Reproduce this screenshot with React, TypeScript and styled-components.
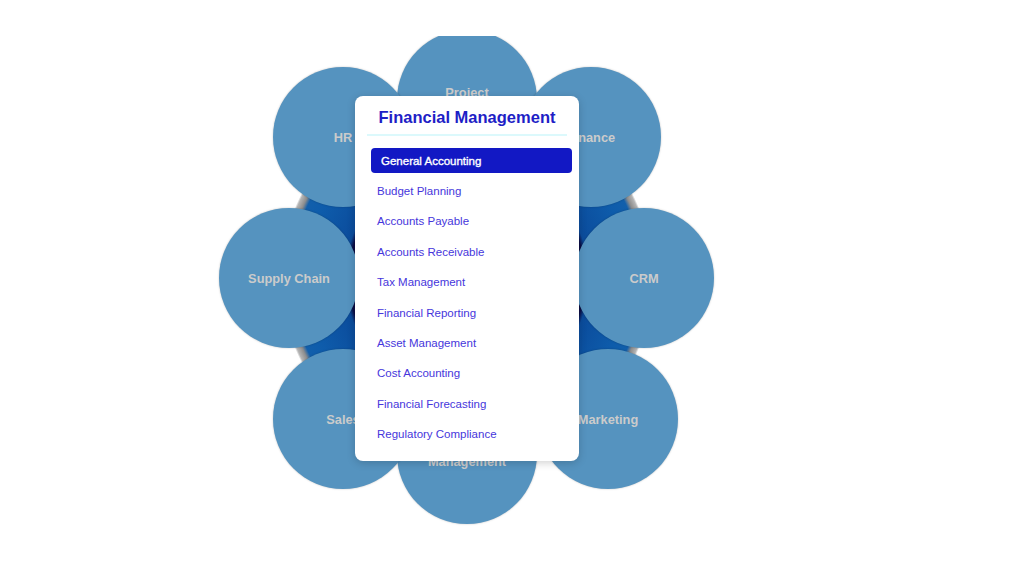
import styled, { createGlobalStyle } from "styled-components";

const GlobalStyle = createGlobalStyle`
  html, body {
    margin: 0;
    padding: 0;
    background: #ffffff;
    font-family: "Liberation Sans", Arial, sans-serif;
  }
`;

const Page = styled.div`
  width: 1024px;
  height: 576px;
  padding-top: 36px;
  box-sizing: border-box;
  overflow: hidden;
`;

const Clip = styled.div`
  height: 540px;
  overflow: hidden;
`;

const Wheel = styled.div`
  position: relative;
  width: 500px;
  height: 500px;
  margin-left: 217px;
  margin-top: -8px;
`;

const Hub = styled.div`
  position: absolute;
  inset: 64px;
  border-radius: 50%;
  background: radial-gradient(
    circle,
    #0a0b3e 0,
    #0b0d45 118px,
    #0b4c9c 122px,
    #0e5cab 160px,
    #125fab 175px,
    #8d8d8d 179px,
    #b5b5b5 184px,
    rgba(255, 255, 255, 0) 186px
  );
`;

const Node = styled.div`
  position: absolute;
  width: 140px;
  height: 140px;
  margin: -70px 0 0 -70px;
  border-radius: 50%;
  background: #5593bf;
  box-shadow: 0 0 2px rgba(0, 0, 0, 0.25);
  display: flex;
  flex-direction: column;
  align-items: center;
  justify-content: center;
  text-align: center;
  color: #cbcbcb;
  font-size: 12.8px;
  font-weight: 700;
  line-height: 15px;
`;

const Card = styled.div`
  position: absolute;
  left: 138px;
  top: 68px;
  width: 224px;
  height: 365px;
  box-sizing: border-box;
  background: #ffffff;
  border-radius: 8px;
  box-shadow: 0 2px 8px rgba(0, 0, 0, 0.18);
  padding-top: 11px;
  z-index: 5;
`;

const Title = styled.h2`
  margin: 0 12px;
  padding-bottom: 7px;
  border-bottom: 2px solid #dcf9fc;
  color: #1e1ec6;
  font-size: 16.5px;
  font-weight: 700;
  line-height: 20px;
  text-align: center;
`;

const List = styled.ul`
  list-style: none;
  margin: 12px 7px 0 16px;
  padding: 0;
  display: flex;
  flex-direction: column;
  gap: 5px;
`;

const Item = styled.li<{ $active?: boolean }>`
  height: 25.4px;
  box-sizing: border-box;
  padding: 0 ${(p) => (p.$active ? "10px" : "6px")};
  display: flex;
  align-items: center;
  border-radius: 4px;
  font-size: 11.5px;
  font-weight: 400;
  -webkit-text-stroke: ${(p) => (p.$active ? "0.35px #ffffff" : "0")};
  color: ${(p) => (p.$active ? "#ffffff" : "#4636dc")};
  background: ${(p) => (p.$active ? "#1218c4" : "transparent")};
  cursor: pointer;
`;

const nodes = [
  { label: ["Project", "Management"], x: 250, y: 72 },
  { label: ["Finance"], x: 374, y: 109 },
  { label: ["CRM"], x: 427, y: 250 },
  { label: ["Marketing"], x: 391, y: 391 },
  { label: ["Inventory", "Management"], x: 250, y: 426 },
  { label: ["Sales"], x: 126, y: 391 },
  { label: ["Supply Chain"], x: 72, y: 250 },
  { label: ["HR"], x: 126, y: 109 },
];

const items = [
  "General Accounting",
  "Budget Planning",
  "Accounts Payable",
  "Accounts Receivable",
  "Tax Management",
  "Financial Reporting",
  "Asset Management",
  "Cost Accounting",
  "Financial Forecasting",
  "Regulatory Compliance",
];

export default function App() {
  return (
    <>
      <GlobalStyle />
      <Page>
        <Clip>
          <Wheel>
            <Hub />
            {nodes.map((n) => (
              <Node key={n.label.join(" ")} style={{ left: n.x, top: n.y }}>
                {n.label.map((l) => (
                  <span key={l}>{l}</span>
                ))}
              </Node>
            ))}
            <Card>
              <Title>Financial Management</Title>
              <List>
                {items.map((it, i) => (
                  <Item key={it} $active={i === 0}>
                    {it}
                  </Item>
                ))}
              </List>
            </Card>
          </Wheel>
        </Clip>
      </Page>
    </>
  );
}
